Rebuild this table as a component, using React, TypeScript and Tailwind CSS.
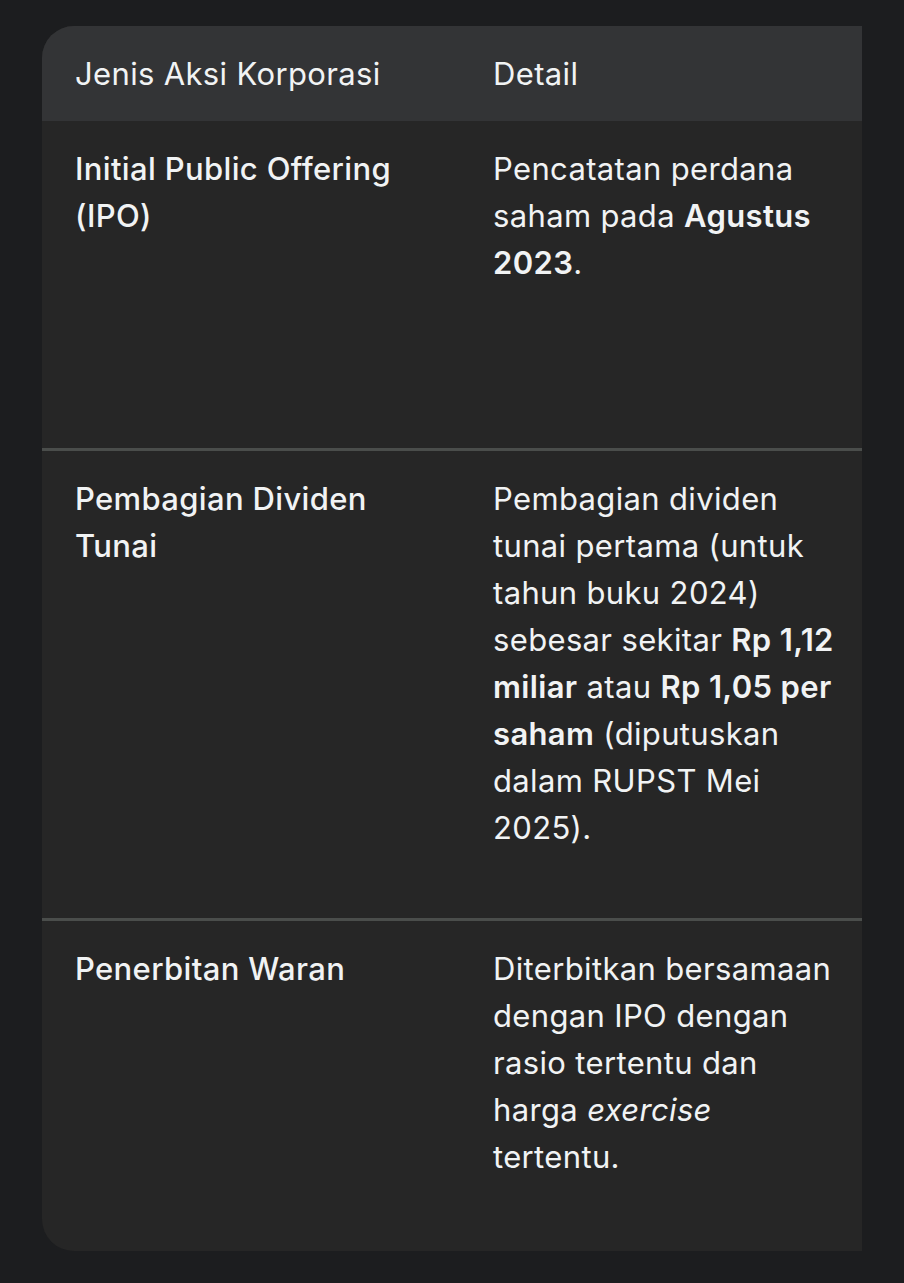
const B = ({ children }: { children: React.ReactNode }) => (
  <span className="font-semibold">{children}</span>
);

const rows = [
  {
    height: 'h-[328px]',
    action: ['Initial Public Offering', '(IPO)'],
    detail: [
      <>Pencatatan perdana</>,
      <>saham pada <B>Agustus</B></>,
      <><B>2023</B>.</>,
    ],
  },
  {
    height: 'h-[470px]',
    action: ['Pembagian Dividen', 'Tunai'],
    detail: [
      <>Pembagian dividen</>,
      <>tunai pertama (untuk</>,
      <>tahun buku 2024)</>,
      <>sebesar sekitar <B>Rp 1,12</B></>,
      <><B>miliar</B> atau <B>Rp 1,05 per</B></>,
      <><B>saham</B> (diputuskan</>,
      <>dalam RUPST Mei</>,
      <>2025).</>,
    ],
  },
  {
    height: 'h-[332px]',
    action: ['Penerbitan Waran'],
    detail: [
      <>Diterbitkan bersamaan</>,
      <>dengan IPO dengan</>,
      <>rasio tertentu dan</>,
      <>harga <i>exercise</i></>,
      <>tertentu.</>,
    ],
  },
];

export default function App() {
  return (
    <div className="min-h-[1283px] bg-[#1c1d1f] pt-[26px] pl-[42px] font-['Inter',sans-serif] text-[31px] leading-[47px] tracking-[0.35px] text-[#f1f3f4]">
      <div className="w-[820px] overflow-hidden rounded-l-[32px] bg-[#262626]">
        <table className="w-full table-fixed border-collapse">
          <colgroup>
            <col className="w-[418px]" />
            <col className="w-[402px]" />
          </colgroup>
          <thead>
            <tr className="h-[95px] bg-[#333436]">
              <th className="pl-[33px] text-left align-middle font-normal">Jenis Aksi Korporasi</th>
              <th className="pl-[33px] text-left align-middle font-normal">Detail</th>
            </tr>
          </thead>
          <tbody>
            {rows.map((row, i) => (
              <tr
                key={i}
                className={`${row.height} ${i < rows.length - 1 ? 'border-b-[3px] border-[#4a4d4b]' : ''}`}
              >
                <td className="pl-[33px] pt-[24px] align-top font-medium">
                  {row.action.map((line, j) => (
                    <div key={j} className="whitespace-nowrap">{line}</div>
                  ))}
                </td>
                <td className="pl-[33px] pt-[24px] align-top">
                  {row.detail.map((line, j) => (
                    <div key={j} className="whitespace-nowrap">{line}</div>
                  ))}
                </td>
              </tr>
            ))}
          </tbody>
        </table>
      </div>
    </div>
  );
}
